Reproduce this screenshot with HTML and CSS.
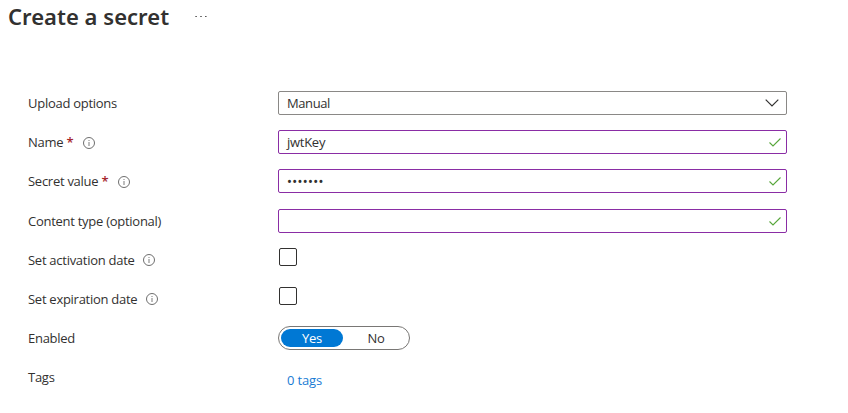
FILE: index.html
```
<!DOCTYPE html>
<html lang="en">
<head>
<meta charset="utf-8">
<title>Create a secret</title>
<link rel="stylesheet" href="styles.css">
</head>
<body>
<svg class="defs" aria-hidden="true">
  <symbol id="info" viewBox="0 0 12 12"><circle cx="6" cy="6" r="5.5" fill="none" stroke="#666" stroke-width=".95"/><path d="M6 5v4M6 3v1" stroke="#888" stroke-width="1.1"/></symbol>
  <symbol id="check" viewBox="0 0 12 9"><path d="M.5 4.5 4 8 11.5.5" fill="none" stroke="#57a63a" stroke-width="1.1"/></symbol>
  <symbol id="chevron" viewBox="0 0 14 8"><path d="M.7.7 7 7 13.3.7" fill="none" stroke="#323130" stroke-width="1.2"/></symbol>
</svg>
<header class="header">
  <h1 class="title">Create a secret</h1>
  <svg class="more" viewBox="0 0 12 2"><path d="M.3 .5h1.6M5.2 .5h1.6M10 .5h1.6" stroke="#555" stroke-width="1"/></svg>
</header>
<main class="form">
  <div class="row"><span class="label">Upload options</span><div class="field select"><span>Manual</span><svg class="chevron"><use href="#chevron"/></svg></div></div>
  <div class="row"><span class="label">Name <b class="required">*</b><svg class="info low"><use href="#info"/></svg></span><div class="field"><span>jwtKey</span><svg class="check"><use href="#check"/></svg></div></div>
  <div class="row secret"><span class="label">Secret value <b class="required">*</b><svg class="info low"><use href="#info"/></svg></span><div class="field"><span class="mask">•••••••</span><svg class="check"><use href="#check"/></svg></div></div>
  <div class="row"><span class="label">Content type (optional)</span><div class="field"><span></span><svg class="check"><use href="#check"/></svg></div></div>
  <div class="row"><span class="label">Set activation date<svg class="info"><use href="#info"/></svg></span><span class="checkbox"></span></div>
  <div class="row"><span class="label">Set expiration date<svg class="info"><use href="#info"/></svg></span><span class="checkbox"></span></div>
  <div class="row"><span class="label">Enabled</span><div class="toggle"><span class="option selected">Yes</span><span class="option off">No</span></div></div>
  <div class="row"><span class="label">Tags</span><a class="tags">0 tags</a></div>
</main>
</body>
</html>
```
FILE: styles.css
```
* { box-sizing: border-box; }
body { margin: 0; background: #fff; color: #323130; font: 13px/24px "Open Sans", "Noto Sans", sans-serif; letter-spacing: -.27px; }
.defs { position: absolute; width: 0; height: 0; }
.header { display: flex; height: 91px; padding: 1px 8px 0; }
.title { width: 161px; margin: 0; font: 600 22px/30px "Noto Sans", sans-serif; letter-spacing: .03px; white-space: nowrap; }
.more { width: 12px; height: 2px; margin: 15px 0 0 26px; }
.form { padding-left: 28px; }
.row { display: flex; height: 39px; align-items: flex-start; }
.secret { height: 40px; }
.label { display: flex; align-items: center; width: 250px; height: 24px; white-space: pre; }
.required { color: #a4262c; font-weight: 600; }
.info { width: 12px; height: 12px; margin-left: 8.5px; }
.low { margin-top: 1px; margin-left: 9.5px; }
.field { display: flex; align-items: center; justify-content: space-between; width: 509px; height: 24px; border: 1px solid #8a2da5; border-radius: 2px; padding: 0 5px 0 8px; }
.select { border-color: #8a8886; padding-right: 7px; letter-spacing: -.4px; }
.mask { font-family: "Noto Sans", sans-serif; letter-spacing: .35px; }
.check { width: 12px; height: 9px; }
.chevron { width: 14px; height: 8px; }
.checkbox { width: 18px; height: 18px; margin-left: 1px; border: 1px solid #323130; border-radius: 2px; }
.toggle { display: flex; width: 132px; height: 24px; padding: 2px; border: 1px solid #797775; border-radius: 12px; }
.option { width: 62px; height: 18px; line-height: 18px; text-align: center; border-radius: 9px; }
.off { width: 64px; padding-left: 2px; }
.selected { color: #fff; background: #0078d4; }
.tags { color: #1a7cd4; margin: 3px 0 0 9px; letter-spacing: -.15px; }
```
